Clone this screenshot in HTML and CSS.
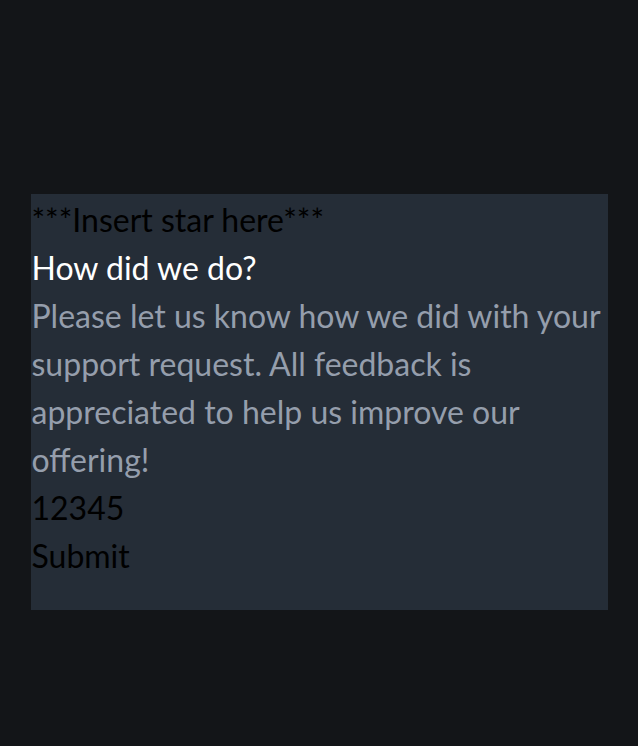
FILE: index.html
```html
<!DOCTYPE html>
<html lang="en">
<head>
<meta charset="utf-8">
<title>Rating</title>
<link rel="stylesheet" href="styles.css">
</head>
<body>
<main class="page">
  <section class="card">
    <div class="star">***Insert star here***</div>
    <h1 class="title">How did we do?</h1>
    <p class="text">Please let us know how we did with your support request. All feedback is appreciated to help us improve our offering!</p>
    <div class="ratings">12345</div>
    <div class="submit">Submit</div>
  </section>
</main>
</body>
</html>
```
FILE: styles.css
```css
html, body {
  margin: 0;
  padding: 0;
  background: #131518;
}
body {
  font-family: Lato, "Open Sans", sans-serif;
  font-size: 32px;
  line-height: 48px;
  color: #000;
}
.page {
  display: flex;
  justify-content: center;
  padding-top: 194px;
}
.card {
  width: 577px;
  background: #252d37;
  padding: 2px 0 30px 1px;
  box-sizing: border-box;
}
.star, .ratings, .submit {
  color: #000;
}
.title {
  margin: 0;
  font-size: inherit;
  font-weight: 400;
  color: #fff;
}
.text {
  margin: 0;
  color: #959eac;
}
```
